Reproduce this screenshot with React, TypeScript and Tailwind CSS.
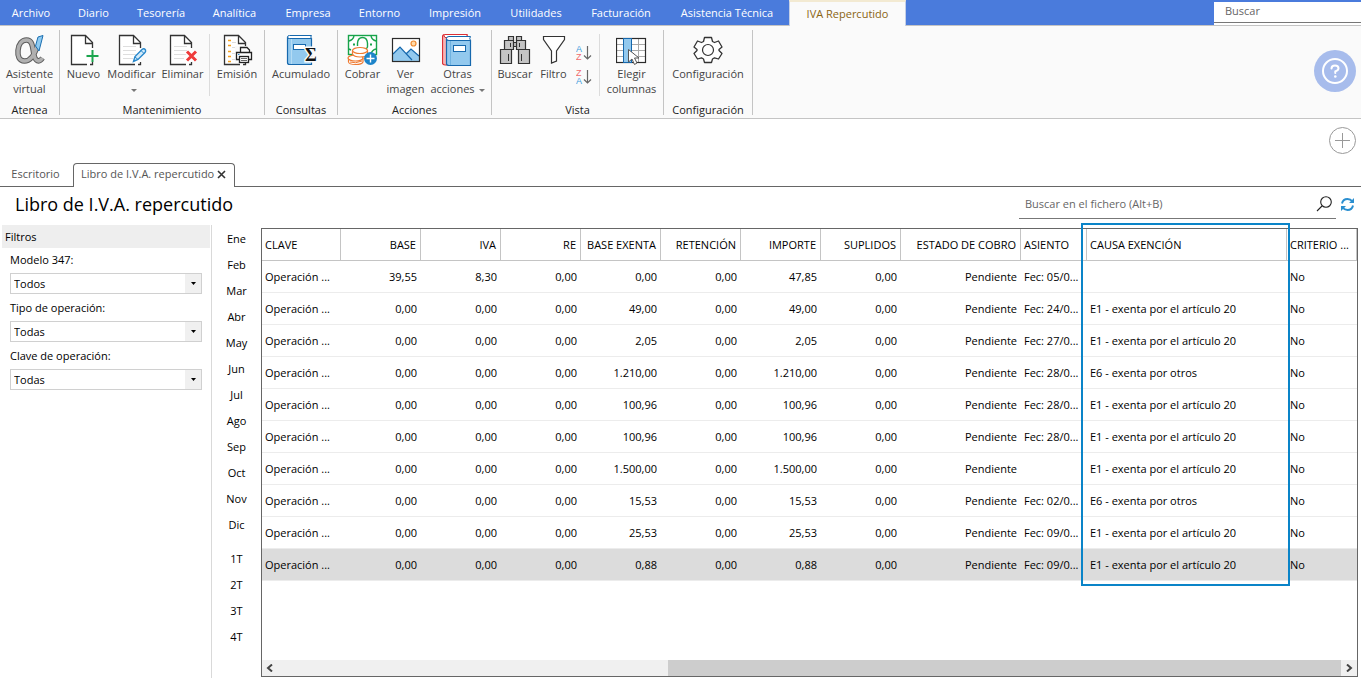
import type { ReactNode } from 'react'

const menuTabs = [
  { label: 'Archivo', width: 'w-[62px]' },
  { label: 'Diario', width: 'w-[63px]' },
  { label: 'Tesorería', width: 'w-[72px]' },
  { label: 'Analítica', width: 'w-[75px]' },
  { label: 'Empresa', width: 'w-[72px]' },
  { label: 'Entorno', width: 'w-[71px]' },
  { label: 'Impresión', width: 'w-[80px]' },
  { label: 'Utilidades', width: 'w-[82px]' },
  { label: 'Facturación', width: 'w-[88px]' },
  { label: 'Asistencia Técnica', width: 'w-[124px]' },
]

const months = ['Ene', 'Feb', 'Mar', 'Abr', 'May', 'Jun', 'Jul', 'Ago', 'Sep', 'Oct', 'Nov', 'Dic']
const quarters = ['1T', '2T', '3T', '4T']

const filters = [
  { id: 'modelo', label: 'Modelo 347:', value: 'Todos' },
  { id: 'tipo', label: 'Tipo de operación:', value: 'Todas' },
  { id: 'clave', label: 'Clave de operación:', value: 'Todas' },
]

const columns = [
  { label: 'CLAVE', width: 'w-[79px]', right: false },
  { label: 'BASE', width: 'w-[80px]', right: true },
  { label: 'IVA', width: 'w-[80px]', right: true },
  { label: 'RE', width: 'w-[80px]', right: true },
  { label: 'BASE EXENTA', width: 'w-[80px]', right: true },
  { label: 'RETENCIÓN', width: 'w-[80px]', right: true },
  { label: 'IMPORTE', width: 'w-[80px]', right: true },
  { label: 'SUPLIDOS', width: 'w-[80px]', right: true },
  { label: 'ESTADO DE COBRO', width: 'w-[120px]', right: true },
  { label: 'ASIENTO', width: 'w-[66px]', right: false },
  { label: 'CAUSA EXENCIÓN', width: 'w-[200px]', right: false },
  { label: 'CRITERIO ...', width: '', right: false },
]

const E1 = 'E1 - exenta por el artículo 20'
const E6 = 'E6 - exenta por otros'

// base, iva, base exenta, importe, asiento, causa
const entries = [
  ['39,55', '8,30', '0,00', '47,85', 'Fec: 05/0...', ''],
  ['0,00', '0,00', '49,00', '49,00', 'Fec: 24/0...', E1],
  ['0,00', '0,00', '2,05', '2,05', 'Fec: 27/0...', E1],
  ['0,00', '0,00', '1.210,00', '1.210,00', 'Fec: 28/0...', E6],
  ['0,00', '0,00', '100,96', '100,96', 'Fec: 28/0...', E1],
  ['0,00', '0,00', '100,96', '100,96', 'Fec: 28/0...', E1],
  ['0,00', '0,00', '1.500,00', '1.500,00', '', E1],
  ['0,00', '0,00', '15,53', '15,53', 'Fec: 02/0...', E6],
  ['0,00', '0,00', '25,53', '25,53', 'Fec: 09/0...', E1],
  ['0,00', '0,00', '0,88', '0,88', 'Fec: 09/0...', E1],
]

const rows = entries.map(([base, iva, exenta, importe, asiento, causa]) => [
  'Operación ...', base, iva, '0,00', exenta, '0,00', importe, '0,00', 'Pendiente', asiento, causa, 'No',
])

function Icon({ children }: { children: ReactNode }) {
  return (
    <svg className="w-8 h-8 shrink-0" viewBox="0 0 32 32" fill="none" aria-hidden="true">
      {children}
    </svg>
  )
}

function Sheet({ lines = false }: { lines?: boolean }) {
  return (
    <>
      <path d="M20 30.5H3.5V1.5H17.5L24.5 8.5V30.5" fill="#fff" />
      {lines && <path d="M7 12.5H20M7 16.5H20M7 20.5H20M7 24.5H17" stroke="#dedede" />}
      <path d="M19 30.5H3.5V1.5H17.5L24.5 8.5V14M17.5 1.5V9.5H24.5M24.5 28V30.5H22" stroke="#333" strokeWidth="1.3" />
    </>
  )
}

// Atenea logo: one looping ribbon with a blue blade
function AteneaLogo() {
  const loop = 'M23 13C20 22 16 27 10.5 27C5 27 3.500 22 4 16.500C4.500 10 8 6 12.500 6C19 6 18.500 14 20 21C21.200 27 25 29 28.500 24'
  return (
    <Icon>
      <path d={loop} stroke="#5c5c5c" strokeWidth="5.500" />
      <path d={loop} stroke="#b0b0b0" strokeWidth="3.500" />
      <path d="M24 3L29 1.500L25 17L21.500 12Z" fill="#8ecbf2" stroke="#1c6fb0" />
    </Icon>
  )
}

function NewIcon() {
  return (
    <Icon>
      <Sheet />
      <path d="M24.5 16V28M18.5 22H30.5" stroke="#fafafa" strokeWidth="4" />
      <path d="M24.5 16V28M18.5 22H30.5" stroke="#1aa54d" strokeWidth="2" />
    </Icon>
  )
}

function EditIcon() {
  return (
    <Icon>
      <Sheet lines />
      <path d="M17.5 27.5L19 22.5L26 15.5Q28 14 29.5 16Q30 17.500 29 18.500L22 25.500Z" fill="#d3ebfa" stroke="#2787cb" strokeWidth="1.4" />
      <path d="M19 23L22 25.500M25 16.500L28 19.500" stroke="#2787cb" />
    </Icon>
  )
}

function DeleteIcon() {
  return (
    <Icon>
      <Sheet lines />
      <path d="M19.500 17.500L28.500 26.500M28.500 17.500L19.500 26.500" stroke="#fff" strokeWidth="5" />
      <path d="M20 17.500L29 26.500M29 17.500L20 26.500" stroke="#ef3b3b" strokeWidth="3" />
    </Icon>
  )
}

function PrintIcon() {
  return (
    <Icon>
      <Sheet />
      <path d="M7 6.500H10M7 11.500H10M7 17.500H10M7 22.500H10M7 27.500H10" stroke="#f5a11d" strokeWidth="1.500" />
      <path d="M11 8.500H15M11 13.500H15M11 19.500H14M11 25.500H15" stroke="#ddd" />
      <rect x="14" y="12" width="18" height="17" fill="#fafafa" />
      <path d="M19.500 18V13.500H26L28.500 16V18M18 25.500H15.500V18.500H30.500V25.500H28" fill="#fff" stroke="#222" strokeWidth="1.300" />
      <rect x="18.500" y="22.500" width="9" height="6" fill="#fff" stroke="#222" strokeWidth="1.300" />
      <path d="M20 24.500H26M20 26.500H26" stroke="#444" strokeWidth="0.800" />
      <path d="M17 20.500H18.500" stroke="#2787cb" />
    </Icon>
  )
}

function SummaryIcon() {
  return (
    <Icon>
      <path d="M2.500 3V28.500Q2.500 30.500 4.500 30.500H26.500V4.500H5Q2.500 4.500 2.500 3Z" fill="#93c9ee" stroke="#1668ad" strokeWidth="1.200" />
      <path d="M26.500 1.500H4.500Q2.500 1.500 2.500 3Q2.500 4.500 4.500 4.500H26.500Q25 3 26.500 1.500Z" fill="#fff" stroke="#1668ad" />
      <path d="M6.500 5V30" stroke="#b5dcf5" />
      <rect x="8.500" y="10.500" width="12" height="5" fill="#fff" stroke="#1668ad" />
      <text x="20" y="27" fontFamily="Liberation Serif, serif" fontWeight="bold" fontSize="18" fill="#111" stroke="#fafafa" strokeWidth="3" paintOrder="stroke">
        Σ
      </text>
    </Icon>
  )
}

function CashIcon() {
  return (
    <Icon>
      <rect x="1.500" y="1.500" width="28" height="19" fill="#fff" stroke="#17a34a" strokeWidth="1.400" />
      <path d="M2 7Q6 6 7 2M24 2Q25 6 29 7M29 15Q25 16 24 20M2 15L4 16" stroke="#17a34a" strokeWidth="1.400" />
      <path d="M10.500 12V9Q11 3.500 15.500 3.500Q20 3.500 20.500 9V13Q19 16 17 17" stroke="#17a34a" strokeWidth="1.400" />
      <path d="M6 10.500H8M23 10.500H25" stroke="#17a34a" strokeWidth="2" />
      <g fill="#fff" stroke="#ee7a31" strokeWidth="1.200">
        <path d="M1.500 24V28Q2 30.500 8.500 30.500Q15 30.500 16 28V24Z" />
        <ellipse cx="8.500" cy="24" rx="7.500" ry="3" />
        <path d="M5.500 16.500V20Q7 23 13 23Q20 23 20.500 20V16.500Z" />
        <ellipse cx="13" cy="16.500" rx="7.500" ry="3" />
      </g>
      <path d="M3 28Q8 30 15 27" stroke="#ee7a31" />
      <circle cx="23.500" cy="24.500" r="6.500" fill="#1d84c9" />
      <path d="M23.500 20.500V28.500M19.500 24.500H27.500" stroke="#fff" strokeWidth="1.400" />
    </Icon>
  )
}

function ImageIcon() {
  return (
    <Icon>
      <rect x="2.500" y="4.500" width="27" height="23" fill="#fff" />
      <path d="M3 20L10 13L20 24V27H3ZM15 20L21 15L29 22V27H18Z" fill="#93c9ee" />
      <path d="M3 20L10 13L22 26M16 20L21 15L29 22" stroke="#1668ad" strokeWidth="1.200" />
      <circle cx="23.500" cy="9.500" r="2.500" fill="#ffd9a8" stroke="#ee8a31" strokeWidth="1.200" />
      <rect x="2.500" y="4.500" width="27" height="23" stroke="#2b2b2b" strokeWidth="1.200" />
    </Icon>
  )
}

function BooksIcon() {
  return (
    <Icon>
      <path d="M25 0.500H3Q0.500 0.500 0.500 3V29Q0.500 31 3 31H5V4H25Z" fill="#f6b4b4" stroke="#dc2f35" strokeWidth="1.200" />
      <path d="M25 0.500H3Q1 1.500 3 3.500H25Z" fill="#fff" stroke="#dc2f35" />
      <path d="M4.500 4.500V29.500Q4.500 31.500 7 31.500H28.500V6.500H7Q4.500 6.500 4.500 4.500Z" fill="#93c9ee" stroke="#1668ad" strokeWidth="1.200" />
      <path d="M28.500 2.500H7Q4.500 2.500 4.500 4.500Q4.500 6.500 7 6.500H28.500Q27 4.500 28.500 2.500Z" fill="#fff" stroke="#1668ad" />
      <path d="M8.500 7V31" stroke="#6fb2e0" />
      <rect x="11.500" y="11.500" width="12" height="6" fill="#fff" stroke="#1668ad" />
    </Icon>
  )
}

function BinocularsIcon() {
  return (
    <Icon>
      <g fill="#c4c4c4" stroke="#333" strokeWidth="1.200">
        <path d="M9.500 2.500H14.500V6.500H9.500ZM17.500 2.500H22.500V6.500H17.500Z" />
        <path d="M13.500 8.500H18.500V12.500H13.500Z" />
        <path d="M5.500 6.500H14.500V15.500H5.500ZM17.500 6.500H26.500V15.500H17.500Z" />
        <path d="M1.500 15.500H12.500V29.500H1.500ZM19.500 15.500H30.500V29.500H19.500Z" />
      </g>
      <path d="M9.500 20V27M22.500 20V27M11.500 9V13M20.500 9V13" stroke="#333" />
    </Icon>
  )
}

function FunnelIcon() {
  return (
    <Icon>
      <path d="M5.500 2.500H26.500V5.500L18.500 17V27L13.500 29V17L5.500 5.500Z" fill="#fff" stroke="#333" strokeWidth="1.200" />
    </Icon>
  )
}

function ColumnsIcon() {
  return (
    <Icon>
      <rect x="0.500" y="4.500" width="29" height="24" fill="#fff" />
      <path d="M1 10.500H29M1 16.500H29M1 22.500H29M15.500 5V28M22.500 5V28" stroke="#aaa" />
      <rect x="0.500" y="4.500" width="29" height="24" stroke="#2b2b2b" strokeWidth="1.200" />
      <rect x="7.500" y="4.500" width="8" height="24" fill="#93c9ee" stroke="#1668ad" />
      <path d="M12.500 15.500V28L16 25L18.500 30.500L21 29L18.500 24H23Z" fill="#fff" stroke="#555" />
    </Icon>
  )
}

function GearIcon() {
  return (
    <Icon>
      <path
        d="M12.500 3.500H19.500L20.500 7.500L22.500 8.500L26.500 7L30 13L27 15.500V16.500L30 19.500L26.500 25L22.500 23.800L20.500 25L19.500 28.500H12.500L11.500 25L9.500 23.800L5.500 25L2 19.500L5 16.500V15.500L2 13L5.500 7L9.500 8.500L11.500 7.500Z"
        fill="#fff"
        stroke="#333"
        strokeWidth="1.300"
        strokeLinejoin="round"
      />
      <circle cx="16" cy="16" r="5.500" stroke="#333" strokeWidth="1.200" />
    </Icon>
  )
}

function SortIcon({ first, second, flip }: { first: string; second: string; flip: boolean }) {
  return (
    <svg className="w-4 h-4" viewBox="0 0 16 16" fill="none" aria-hidden="true">
      <text x="0" y="7" fontSize="9" fontFamily="Liberation Sans, sans-serif" fill={flip ? '#f06a6a' : '#3d9bdc'}>
        {first}
      </text>
      <text x="0" y="15" fontSize="9" fontFamily="Liberation Sans, sans-serif" fill={flip ? '#3d9bdc' : '#f06a6a'}>
        {second}
      </text>
      <path d="M11.500 1V14M8 10.500L11.500 14L15 10.500" stroke="#666" strokeWidth="1.200" />
    </svg>
  )
}

function Caret() {
  return (
    <svg className="inline-block w-[6px] h-[3px] ml-1 align-middle" viewBox="0 0 6 3" aria-hidden="true">
      <path d="M0 0H6L3 3Z" fill="#777" />
    </svg>
  )
}

function RibbonButton({ icon, width, children }: { icon: ReactNode; width: string; children: ReactNode }) {
  return (
    <button type="button" className={`${width} flex flex-col items-center text-center text-[11px] leading-[15px] whitespace-nowrap text-[#444]`}>
      {icon}
      <span>{children}</span>
    </button>
  )
}

function RibbonGroup({ label, width, children }: { label: string; width: string; children: ReactNode }) {
  return (
    <section className={`${width} shrink-0 flex flex-col justify-between border-r border-[#c4c4c4]`}>
      <div className="flex justify-center pt-1">{children}</div>
      <h2 className="text-center text-[11px] leading-[10px] whitespace-nowrap text-[#222]">{label}</h2>
    </section>
  )
}

function Ribbon() {
  return (
    <div className="flex items-center justify-between border-y border-[#c4c4c4] bg-[#fafafa] pt-1 h-[94px]">
      <div className="flex self-stretch pb-[3px]">
        <RibbonGroup label="Atenea" width="w-[60px]">
          <RibbonButton icon={<AteneaLogo />} width="w-[58px]">Asistente<br />virtual</RibbonButton>
        </RibbonGroup>
        <RibbonGroup label="Mantenimiento" width="w-[205px]">
          <RibbonButton icon={<NewIcon />} width="w-[47px]">Nuevo</RibbonButton>
          <RibbonButton icon={<EditIcon />} width="w-[49px]">Modificar<br /><Caret /></RibbonButton>
          <RibbonButton icon={<DeleteIcon />} width="w-[53px]">Eliminar</RibbonButton>
          <div className="w-px bg-[#dcdcdc]" />
          <RibbonButton icon={<PrintIcon />} width="w-[54px]">Emisión</RibbonButton>
        </RibbonGroup>
        <RibbonGroup label="Consultas" width="w-[73px]">
          <RibbonButton icon={<SummaryIcon />} width="w-[72px]">Acumulado</RibbonButton>
        </RibbonGroup>
        <RibbonGroup label="Acciones" width="w-[154px]">
          <RibbonButton icon={<CashIcon />} width="w-[46px]">Cobrar</RibbonButton>
          <RibbonButton icon={<ImageIcon />} width="w-[40px]">Ver<br />imagen</RibbonButton>
          <RibbonButton icon={<BooksIcon />} width="w-[64px]">Otras<br />acciones<Caret /></RibbonButton>
        </RibbonGroup>
        <RibbonGroup label="Vista" width="w-[172px]">
          <RibbonButton icon={<BinocularsIcon />} width="w-[46px]">Buscar</RibbonButton>
          <RibbonButton icon={<FunnelIcon />} width="w-[31px]">Filtro</RibbonButton>
          <div className="w-[30px] flex flex-col items-center gap-2 pt-[11px]">
            <button type="button" className="h-4" aria-label="Orden ascendente"><SortIcon first="A" second="Z" flip={false} /></button>
            <button type="button" className="h-4" aria-label="Orden descendente"><SortIcon first="Z" second="A" flip /></button>
          </div>
          <div className="w-px bg-[#dcdcdc]" />
          <RibbonButton icon={<ColumnsIcon />} width="w-[63px]">Elegir<br />columnas</RibbonButton>
        </RibbonGroup>
        <RibbonGroup label="Configuración" width="w-[89px]">
          <RibbonButton icon={<GearIcon />} width="w-[88px]">Configuración</RibbonButton>
        </RibbonGroup>
      </div>
      <button type="button" aria-label="Ayuda" className="mr-[5px] mb-[6px] flex w-[42px] h-[42px] items-center justify-center rounded-full bg-[#a7bcec]">
        <svg className="w-[26px] h-[26px]" viewBox="0 0 26 26" fill="none" stroke="#fff" strokeWidth="2">
          <circle cx="13" cy="13" r="12" />
          <path d="M9.500 10.500Q9.500 7.500 13 7.500Q16.500 7.500 16.500 10.300Q16.500 12.300 13.300 13.500V15" strokeLinecap="round" />
          <circle cx="13.300" cy="18.500" r="1.300" fill="#fff" stroke="none" />
        </svg>
      </button>
    </div>
  )
}

function FilterPanel() {
  return (
    <aside className="w-[212px] shrink-0 border-r border-[#d9d9d9] pl-[2px]">
      <h2 className="mr-px bg-[#eeeeee] pl-[3px] text-[11px] leading-[23px]">Filtros</h2>
      <div className="flex flex-col pt-[3px] pl-2 pr-[9px]">
        {filters.map((filter) => (
          <div key={filter.id} className="mb-[5px]">
            <label htmlFor={filter.id} className="block text-[11px] leading-[16px] pt-px pb-[5px]">
              {filter.label}
            </label>
            <div className="relative">
              <select id={filter.id} className="block w-full h-[21px] appearance-none border border-[#d0d0d0] bg-white pl-[3px] text-[11px] leading-[19px]">
                <option>{filter.value}</option>
              </select>
              <span className="pointer-events-none absolute inset-y-px right-px flex w-4 items-center justify-center bg-[#f0f0f0]">
                <svg className="w-[5px] h-[3px]" viewBox="0 0 5 3"><path d="M0 0H5L2.500 3Z" fill="#000" /></svg>
              </span>
            </div>
          </div>
        ))}
      </div>
    </aside>
  )
}

function PeriodList() {
  return (
    <nav className="w-[49px] shrink-0 flex flex-col text-[11px] pt-px">
      {months.map((month) => (
        <button key={month} type="button" className="h-[26px]">{month}</button>
      ))}
      <div className="h-2" />
      {quarters.map((quarter) => (
        <button key={quarter} type="button" className="h-[26px]">{quarter}</button>
      ))}
    </nav>
  )
}

function Ledger() {
  return (
    <div className="relative mt-[3px] mr-[3px] mb-px flex min-w-0 flex-1 flex-col border border-[#666]">
      <table className="w-full table-fixed border-separate border-spacing-0 text-[11px] leading-4">
        <thead>
          <tr className="h-8">
            {columns.map((col) => (
              <th
                key={col.label}
                className={`${col.width} ${col.right ? 'text-right' : 'text-left'} border-r border-b border-[#c4c4c4] pl-[3px] pr-1 font-normal whitespace-nowrap`}
              >
                {col.label}
              </th>
            ))}
          </tr>
        </thead>
        <tbody>
          {rows.map((row, i) => (
            <tr key={i} className={i === rows.length - 1 ? 'h-8 bg-[#dcdcdc]' : 'h-8'}>
              {row.map((cell, j) => (
                <td key={j} className={`${columns[j].right ? 'text-right' : 'text-left'} border-b border-[#ececec] pl-[3px] pr-1 whitespace-nowrap`}>
                  {cell}
                </td>
              ))}
            </tr>
          ))}
        </tbody>
      </table>

      {/* Highlighted column */}
      <div className="pointer-events-none absolute -top-[6px] right-[67px] w-[209px] h-[363px] border-2 border-[#0a84c8]" />

      {/* Horizontal scrollbar */}
      <div className="mt-auto flex h-4 bg-[#f0f0f0]">
        <button type="button" aria-label="Desplazar a la izquierda" className="flex w-4 items-center justify-center">
          <svg className="w-2 h-2" viewBox="0 0 8 8" fill="none" stroke="#444" strokeWidth="2"><path d="M6 0.500L2 4L6 7.500" /></svg>
        </button>
        <div className="flex flex-1 justify-end">
          <div className="w-[63.300%] bg-[#cdcdcd]" />
        </div>
        <button type="button" aria-label="Desplazar a la derecha" className="flex w-4 items-center justify-center">
          <svg className="w-2 h-2" viewBox="0 0 8 8" fill="none" stroke="#444" strokeWidth="2"><path d="M2 0.500L6 4L2 7.500" /></svg>
        </button>
      </div>
    </div>
  )
}

export default function App() {
  return (
    <div className="flex min-h-screen flex-col bg-white font-['Open_Sans','Noto_Sans',sans-serif] text-black">
      {/* Main menu */}
      <header className="flex h-[25px] bg-[#4a7bdc] text-[11px]">
        <nav className="flex">
          {menuTabs.map((tab) => (
            <button key={tab.label} type="button" className={`${tab.width} shrink-0 whitespace-nowrap pt-[2px] text-white`}>
              {tab.label}
            </button>
          ))}
          <button type="button" className="relative z-10 h-[26px] w-[117px] shrink-0 border-x border-t-2 border-[#c4cfe6] border-t-[#f3ead2] bg-[#fafafa] whitespace-nowrap text-[#8a6412]">
            IVA Repercutido
          </button>
        </nav>
        <div className="ml-auto mt-[2px] w-[147px] bg-white">
          <input aria-label="Buscar" placeholder="Buscar" className="block h-[21px] w-full border-b border-[#777] px-[11px] pb-[3px] text-[11px] placeholder:text-[#666] outline-none" />
        </div>
      </header>

      <Ribbon />

      {/* Open documents */}
      <div className="flex justify-end pt-2 pr-[5px]">
        <button type="button" aria-label="Nueva pestaña" className="rounded-full">
          <svg className="block w-[27px] h-[27px]" viewBox="0 0 27 27" fill="none" stroke="#999">
            <circle cx="13.500" cy="13.500" r="13" />
            <path d="M13.500 6V21M6 13.500H21" />
          </svg>
        </button>
      </div>
      <div className="mt-[9px] flex h-6 text-[11px] text-[#555]">
        <button type="button" className="w-[73px] border-b border-[#666] pr-[2px]">Escritorio</button>
        <div className="flex w-[162px] items-center justify-between rounded-t border border-b-0 border-[#666] pb-[2px] pl-[7px] pr-2 whitespace-nowrap">
          Libro de I.V.A. repercutido
          <button type="button" aria-label="Cerrar">
            <svg className="block w-[9px] h-[9px]" viewBox="0 0 9 9" stroke="#333" strokeWidth="1.600"><path d="M1 1L8 8M8 1L1 8" /></svg>
          </button>
        </div>
        <div className="flex-1 border-b border-[#666]" />
      </div>

      {/* Title and file search */}
      <div className="flex h-[38px] justify-between pl-[15px] pr-[6px]">
        <h1 className="text-[18px] leading-[35px] whitespace-nowrap">Libro de I.V.A. repercutido</h1>
        <div className="flex h-8 items-center gap-1">
          <div className="flex h-full w-[317px] items-center border-b border-[#777] pt-[3px] pr-1">
            <input aria-label="Buscar en el fichero" placeholder="Buscar en el fichero (Alt+B)" className="min-w-0 flex-1 pl-[6px] text-[11px] placeholder:text-[#666] outline-none" />
            <svg className="w-4 h-4" viewBox="0 0 16 16" fill="none" stroke="#222" strokeWidth="1.100">
              <circle cx="10" cy="6" r="5.300" />
              <path d="M6 10L1 15" />
            </svg>
          </div>
          <button type="button" aria-label="Actualizar" className="pt-[3px]">
            <svg className="block w-[15px] h-[15px]" viewBox="0 0 15 15" fill="none" stroke="#2b8fd0" strokeWidth="2">
              <path d="M2 6.500Q3 2 7.500 2Q10.500 2 12.500 4.500M13 8.500Q12 13 7.500 13Q4.500 13 2.500 10.500" />
              <path d="M14 1V6H9ZM1 14V9H6Z" fill="#2b8fd0" stroke="none" />
            </svg>
          </button>
        </div>
      </div>

      <main className="flex flex-1">
        <FilterPanel />
        <PeriodList />
        <Ledger />
      </main>
    </div>
  )
}
